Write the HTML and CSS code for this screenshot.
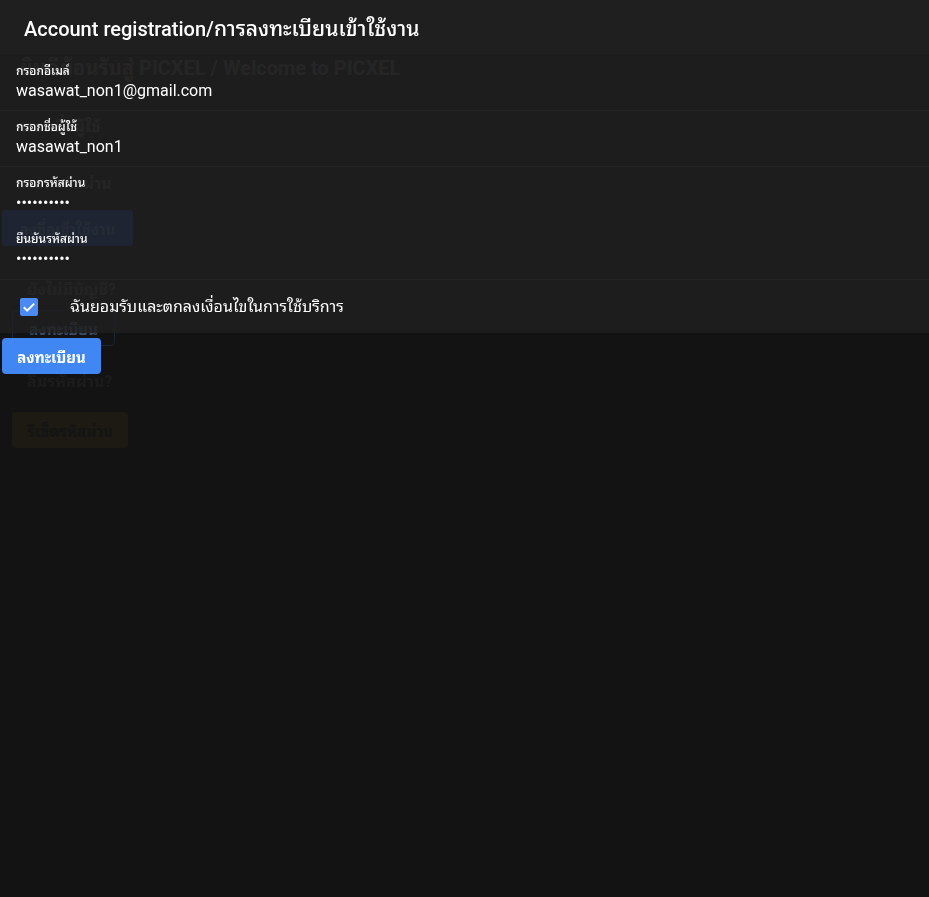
FILE: index.html
```html
<!DOCTYPE html>
<html lang="th">
<head>
<meta charset="utf-8">
<title>Account registration</title>
<link rel="stylesheet" href="styles.css">
</head>
<body>
<div class="page">
  <section class="row row-head"><h1 class="welcome">ยินดีต้อนรับสู่ PICXEL / Welcome to PICXEL</h1></section>
  <section class="row row-user"><p class="bg-label">กรอกชื่อผู้ใช้</p></section>
  <section class="row row-pass">
    <p class="bg-label">กรอกรหัสผ่าน</p>
    <button class="bg-login">ลงชื่อเข้าใช้งาน</button>
  </section>
  <section class="row-links">
    <p class="bg-link">ยังไม่มีบัญชี?</p>
    <button class="bg-outline">ลงทะเบียน</button>
    <p class="bg-link bg-link-forgot">ลืมรหัสผ่าน?</p>
    <button class="bg-reset">รีเซ็ตรหัสผ่าน</button>
  </section>
</div>

<div class="dialog-layer">
  <div class="dialog">
    <header class="dialog-title">Account registration/<span class="title-th">การลงทะเบียนเข้าใช้งาน</span></header>
    <div class="dialog-body">
      <div class="field">
        <span class="field-label">กรอกอีเมล์</span>
        <span class="field-value">wasawat_non1@gmail.com</span>
      </div>
      <div class="field">
        <span class="field-label">กรอกชื่อผู้ใช้</span>
        <span class="field-value">wasawat_non1</span>
      </div>
      <div class="field">
        <span class="field-label">กรอกรหัสผ่าน</span>
        <span class="field-value dots">••••••••••</span>
      </div>
      <div class="field">
        <span class="field-label">ยืนยันรหัสผ่าน</span>
        <span class="field-value dots">••••••••••</span>
      </div>
      <label class="agree">
        <svg class="check" width="18" height="18" viewBox="0 0 18 18" aria-hidden="true">
          <rect x="0" y="0" width="18" height="18" rx="2" fill="#4a8af2"/>
          <path d="M3.8 9.2 L7.2 12.6 L14.2 5.6" fill="none" stroke="#ffffff" stroke-width="2"/>
        </svg>
        <span class="agree-text">ฉันยอมรับและตกลงเงื่อนไขในการใช้บริการ</span>
      </label>
    </div>
  </div>
  <button class="submit">ลงทะเบียน</button>
</div>
</body>
</html>
```

FILE: styles.css
```css
html, body {
  margin: 0;
  padding: 0;
}
body {
  background: #131313;
  font-family: Roboto, "Noto Sans Thai Looped", sans-serif;
  color: #fff;
  height: 897px;
  overflow: hidden;
}
button {
  font-family: inherit;
  border: 0;
  padding: 0;
}

/* ---------- background page ---------- */
.page {
  padding-top: 56px;
}
.row {
  border-bottom: 1px solid #333333;
  box-sizing: content-box;
}
.row-head { height: 54px; }
.row-user { height: 55px; }
.row-pass { height: 112px; }
.welcome {
  margin: 0;
  padding-left: 20px;
  font-size: 20px;
  line-height: 24px;
  font-weight: 700;
  color: #3b3b3b;
}
.bg-label {
  margin: 0;
  padding: 4px 0 0 16px;
  font-size: 16px;
  line-height: 24px;
  font-weight: 700;
  color: #3b3b3b;
}
.row-pass .bg-label { padding-top: 5px; }
.bg-login {
  display: block;
  margin: 14px 0 0 2px;
  width: 131px;
  height: 36px;
  border-radius: 4px;
  background: #143276;
  color: #3a5a8a;
  font-size: 15px;
  font-weight: 700;
}
.row-links {
  display: flex;
  flex-direction: column;
  align-items: flex-start;
}
.bg-link {
  margin: 0;
  padding-left: 27px;
  font-size: 16px;
  line-height: 20px;
  font-weight: 700;
  color: #2f2f2f;
}
.bg-outline {
  margin: 10px 0 0 12px;
  width: 103px;
  height: 36px;
  box-sizing: border-box;
  border: 1px solid #1c2536;
  border-radius: 4px;
  background: transparent;
  color: #3a4a62;
  font-size: 15px;
  font-weight: 700;
}
.bg-link-forgot {
  margin-top: 26px;
  color: #1c1c1c;
}
.bg-reset {
  margin: 20px 0 0 12px;
  width: 116px;
  height: 36px;
  border-radius: 4px;
  background: #1c1a13;
  color: #141414;
  font-size: 15px;
  font-weight: 700;
}

/* ---------- dialog overlay ---------- */
.dialog-layer {
  position: fixed;
  top: 0;
  left: 0;
  right: 0;
  display: flex;
  flex-direction: column;
  align-items: flex-start;
}
.dialog {
  align-self: stretch;
  height: 333px;
  background: rgba(33, 33, 33, 0.8);
}
.dialog-title {
  height: 56px;
  box-sizing: border-box;
  padding: 17px 24px 0;
  font-size: 20px;
  line-height: 24px;
  font-weight: 500;
  background: rgba(36, 36, 36, 0.35);
  border-bottom: 1px solid #1b1b1b;
}
.title-th {
  font-size: 21px;
}
.dialog-body {
  padding: 7px 16px 0;
  display: flex;
  flex-direction: column;
  gap: 16px;
}
.field {
  display: flex;
  flex-direction: column;
}
.field-label {
  font-size: 12px;
  line-height: 16px;
  font-weight: 500;
}
.field-value {
  font-size: 16px;
  line-height: 24px;
}
.agree {
  display: flex;
  align-items: center;
  gap: 32px;
  margin: 7px 0 0 4px;
  height: 26px;
}
.check { flex: none; }
.agree-text {
  font-size: 16px;
  line-height: 24px;
}
.submit {
  margin: 5px 0 0 2px;
  width: 99px;
  height: 36px;
  border-radius: 4px;
  background: #4087f4;
  color: #fff;
  font-size: 15px;
  font-weight: 700;
}
```
